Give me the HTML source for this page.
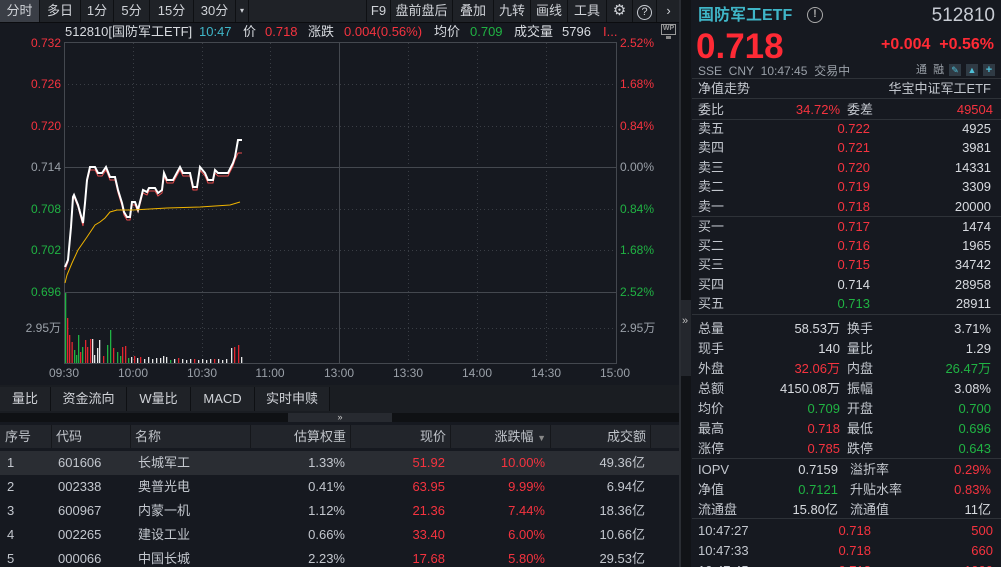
<!DOCTYPE html>
<html style="width:1001px;height:567px;overflow:hidden"><head><meta charset="utf-8"><style>
*{margin:0;padding:0;box-sizing:border-box}
body{width:1001px;height:567px;background:#161920;font-family:"Liberation Sans","Noto Sans CJK SC",sans-serif;color:#c3c7ce;font-size:13px;position:relative;overflow:hidden}
.a{position:absolute;white-space:nowrap;line-height:1}
.r{color:#f5333f}.g{color:#20b343}.w{color:#d8dbe0}.c{color:#3fb6c8}.gy{color:#9aa0a8}
.tb{position:absolute;top:0;height:22px;background:#1f2227;border-right:1px solid #0e1013;font-size:13px;line-height:22px;text-align:center;color:#d0d3d8}
.hl{position:absolute;height:1px;background:#2e3238}
.tab{position:absolute;top:387px;height:24px;line-height:24px;text-align:center;background:#1f2227;border-right:1px solid #0e1013;color:#d0d3d8}
.th{position:absolute;top:425px;height:23px;line-height:23px;color:#c0c4ca;border-right:1px solid #15171b}
.row{position:absolute;left:0;width:680px;height:24px;line-height:24px}
.row span{position:absolute;white-space:nowrap}
</style></head><body>
<!-- toolbar -->
<div class="a" style="left:0;top:0;width:680px;height:22px;background:#1f2227"></div>
<div class="tb" style="left:0;width:40px;background:#3a3e46">分时</div>
<div class="tb" style="left:40px;width:41px">多日</div>
<div class="tb" style="left:81px;width:33px">1分</div>
<div class="tb" style="left:114px;width:36px">5分</div>
<div class="tb" style="left:150px;width:44px">15分</div>
<div class="tb" style="left:194px;width:42px">30分</div>
<div class="tb" style="left:236px;width:13px;font-size:8px">▾</div>
<div class="tb" style="left:366px;width:25px;border-left:1px solid #0e1013">F9</div>
<div class="tb" style="left:391px;width:62px">盘前盘后</div>
<div class="tb" style="left:453px;width:41px">叠加</div>
<div class="tb" style="left:494px;width:37px">九转</div>
<div class="tb" style="left:531px;width:37px">画线</div>
<div class="tb" style="left:568px;width:39px">工具</div>
<div class="tb" style="left:607px;width:26px;font-size:15px">⚙</div>
<div class="tb" style="left:633px;width:24px"><span style="display:inline-block;width:15px;height:15px;border:1.5px solid #c8ccd2;border-radius:50%;font-size:11px;line-height:12px;margin-top:3px">?</span></div>
<div class="tb" style="left:657px;width:23px;border:none">›</div>
<div class="a" style="left:0;top:22px;width:680px;height:1px;background:#0b0c0f"></div>

<!-- chart header -->
<div class="a w" style="left:65px;top:25px">512810[国防军工ETF]</div>
<div class="a c" style="left:199px;top:25px">10:47</div>
<div class="a w" style="left:243px;top:25px">价</div>
<div class="a r" style="left:265px;top:25px">0.718</div>
<div class="a w" style="left:308px;top:25px">涨跌</div>
<div class="a r" style="left:344px;top:25px">0.004(0.56%)</div>
<div class="a w" style="left:434px;top:25px">均价</div>
<div class="a g" style="left:470px;top:25px">0.709</div>
<div class="a w" style="left:514px;top:25px">成交量</div>
<div class="a w" style="left:562px;top:25px">5796</div>
<div class="a r" style="left:603px;top:25px">I...</div>
<div class="a" style="left:661px;top:24px;width:15px;height:11px;border:1.5px solid #999;font-size:7px;line-height:8px;text-align:center;color:#999;font-weight:bold">WP</div>
<div class="a" style="left:666px;top:36px;width:5px;height:3px;background:#888"></div>

<svg class="a" style="left:0;top:0" width="680" height="385">
<g font-family="Liberation Sans" font-size="12" text-anchor="end">
<text x="61" y="47" fill="#f5333f">0.732</text>
<text x="61" y="88" fill="#f5333f">0.726</text>
<text x="61" y="130" fill="#f5333f">0.720</text>
<text x="61" y="171" fill="#9aa0a8">0.714</text>
<text x="61" y="213" fill="#20b343">0.708</text>
<text x="61" y="254" fill="#20b343">0.702</text>
<text x="61" y="296" fill="#20b343">0.696</text>
<text x="61" y="332" fill="#9aa0a8">2.95万</text>
</g>
<g font-family="Liberation Sans" font-size="12">
<text x="620" y="47" fill="#f5333f">2.52%</text>
<text x="620" y="88" fill="#f5333f">1.68%</text>
<text x="620" y="130" fill="#f5333f">0.84%</text>
<text x="620" y="171" fill="#9aa0a8">0.00%</text>
<text x="620" y="213" fill="#20b343">0.84%</text>
<text x="620" y="254" fill="#20b343">1.68%</text>
<text x="620" y="296" fill="#20b343">2.52%</text>
<text x="620" y="332" fill="#9aa0a8">2.95万</text>
</g>
<g font-family="Liberation Sans" font-size="12" fill="#9aa0a8" text-anchor="middle">
<text x="64" y="377">09:30</text><text x="133" y="377">10:00</text><text x="202" y="377">10:30</text><text x="270" y="377">11:00</text><text x="339" y="377">13:00</text><text x="408" y="377">13:30</text><text x="477" y="377">14:00</text><text x="546" y="377">14:30</text><text x="615" y="377">15:00</text>
</g>
<g stroke="#3a3e45" stroke-width="1" stroke-dasharray="1,3">
<line x1="64" y1="84.5" x2="616" y2="84.5"/><line x1="64" y1="126.5" x2="616" y2="126.5"/><line x1="64" y1="209.5" x2="616" y2="209.5"/><line x1="64" y1="250.5" x2="616" y2="250.5"/><line x1="64" y1="328.5" x2="616" y2="328.5"/>
<line x1="133.5" y1="43" x2="133.5" y2="363"/><line x1="202.5" y1="43" x2="202.5" y2="363"/><line x1="270.5" y1="43" x2="270.5" y2="363"/><line x1="408.5" y1="43" x2="408.5" y2="363"/><line x1="477.5" y1="43" x2="477.5" y2="363"/><line x1="546.5" y1="43" x2="546.5" y2="363"/>
</g>
<g stroke="#44484f" stroke-width="1" fill="none">
<rect x="64.5" y="42.5" width="552" height="321"/>
<line x1="64" y1="167.5" x2="616" y2="167.5"/>
<line x1="64" y1="292.5" x2="616" y2="292.5"/>
<line x1="339.5" y1="43" x2="339.5" y2="363"/>
</g>
<!-- volume -->
<g>
<rect x="65" y="293" width="1.3" height="70" fill="#20b343"/>
<rect x="67" y="318" width="1.3" height="45" fill="#e0262f"/>
<rect x="69" y="335" width="1.3" height="28" fill="#e0262f"/>
<rect x="71.5" y="342" width="1.3" height="21" fill="#e0262f"/>
<rect x="74" y="350" width="1.3" height="13" fill="#20b343"/>
<rect x="76" y="355" width="1.3" height="8" fill="#20b343"/>
<rect x="78" y="335" width="1.3" height="28" fill="#20b343"/>
<rect x="80" y="352" width="1.3" height="11" fill="#e0262f"/>
<rect x="82" y="347" width="1.3" height="16" fill="#20b343"/>
<rect x="85" y="340" width="1.3" height="23" fill="#e0262f"/>
<rect x="87" y="347" width="1.3" height="16" fill="#e0262f"/>
<rect x="90" y="339" width="1.3" height="24" fill="#e0262f"/>
<rect x="92" y="339" width="1.3" height="24" fill="#e8e8e8"/>
<rect x="94" y="355" width="1.3" height="8" fill="#e8e8e8"/>
<rect x="97" y="348" width="1.3" height="15" fill="#e8e8e8"/>
<rect x="99" y="340" width="1.3" height="23" fill="#e8e8e8"/>
<rect x="103" y="356" width="1.3" height="7" fill="#e0262f"/>
<rect x="107" y="345" width="1.3" height="18" fill="#20b343"/>
<rect x="110" y="330" width="1.3" height="33" fill="#20b343"/>
<rect x="113" y="348" width="1.3" height="15" fill="#e0262f"/>
<rect x="117" y="352" width="1.3" height="11" fill="#20b343"/>
<rect x="120" y="356" width="1.3" height="7" fill="#20b343"/>
<rect x="122" y="347" width="1.3" height="16" fill="#e0262f"/>
<rect x="125" y="346" width="1.3" height="17" fill="#e0262f"/>
<rect x="128" y="358" width="1.3" height="5" fill="#20b343"/>
<rect x="131" y="357" width="1.3" height="6" fill="#e8e8e8"/>
<rect x="134" y="356" width="1.3" height="7" fill="#e0262f"/>
<rect x="137" y="358" width="1.3" height="5" fill="#e8e8e8"/>
<rect x="140" y="357" width="1.3" height="6" fill="#e0262f"/>
<rect x="144" y="359" width="1.3" height="4" fill="#e8e8e8"/>
<rect x="148" y="357" width="1.3" height="6" fill="#e8e8e8"/>
<rect x="152" y="359" width="1.3" height="4" fill="#e8e8e8"/>
<rect x="156" y="358" width="1.3" height="5" fill="#e8e8e8"/>
<rect x="160" y="358" width="1.3" height="5" fill="#e8e8e8"/>
<rect x="163" y="356" width="1.3" height="7" fill="#e8e8e8"/>
<rect x="166" y="357" width="1.3" height="6" fill="#e8e8e8"/>
<rect x="170" y="360" width="1.3" height="3" fill="#20b343"/>
<rect x="174" y="359" width="1.3" height="4" fill="#e8e8e8"/>
<rect x="178" y="358" width="1.3" height="5" fill="#e0262f"/>
<rect x="182" y="359" width="1.3" height="4" fill="#e8e8e8"/>
<rect x="186" y="360" width="1.3" height="3" fill="#e8e8e8"/>
<rect x="190" y="359" width="1.3" height="4" fill="#e8e8e8"/>
<rect x="194" y="359" width="1.3" height="4" fill="#e0262f"/>
<rect x="198" y="360" width="1.3" height="3" fill="#e8e8e8"/>
<rect x="202" y="359" width="1.3" height="4" fill="#e8e8e8"/>
<rect x="206" y="360" width="1.3" height="3" fill="#e8e8e8"/>
<rect x="210" y="359" width="1.3" height="4" fill="#e8e8e8"/>
<rect x="214" y="359" width="1.3" height="4" fill="#e0262f"/>
<rect x="218" y="359" width="1.3" height="4" fill="#e8e8e8"/>
<rect x="222" y="360" width="1.3" height="3" fill="#e8e8e8"/>
<rect x="226" y="359" width="1.3" height="4" fill="#e8e8e8"/>
<rect x="231" y="348" width="1.3" height="15" fill="#e8e8e8"/>
<rect x="234" y="347" width="1.3" height="16" fill="#e0262f"/>
<rect x="238" y="345" width="1.3" height="18" fill="#e0262f"/>
<rect x="241" y="357" width="1.3" height="6" fill="#e8e8e8"/>
</g>
<polyline fill="none" stroke="#e94b4b" stroke-width="1" points="65,270 68,262 71,229 73,199 74,197 78,207 83,226 85,205 87,182 90,170 95,170 98,176 102,176 106,170 110,180 115,180 118,193 122,206 124,215 127,220 130,220 132,205 135,205 138,212 143,193 147,195 149,191 155,191 158,196 162,193 164,176 167,183 173,183 180,170 183,176 190,176 193,190 197,190 200,170 205,176 208,183 213,183 215,173 218,176 228,176 233,166 235,160 238,153 242,153"/>
<polyline fill="none" stroke="#ffffff" stroke-width="2" points="65,267 68,260 71,227 73,197 74,195 78,205 83,223 85,203 87,180 90,167 95,167 98,173 102,173 106,167 110,177 115,177 118,190 122,203 124,212 127,217 130,217 132,202 135,202 138,210 143,190 147,192 149,188 155,188 158,193 162,190 164,173 167,180 173,180 180,167 183,173 190,173 193,187 197,187 200,167 205,173 208,180 213,180 215,170 218,173 228,173 233,163 235,157 238,140 242,140"/>
<polyline fill="none" stroke="#f0b400" stroke-width="1" points="65,283 67,275 72,263 78,250 87,237 95,225 100,222 105,218 110,212 117,210 133,210 167,208 200,207 230,205 240,202"/>
</svg>

<!-- bottom tabs -->
<div class="a" style="left:0;top:385px;width:680px;height:28px;background:#1a1d22"></div>
<div class="tab" style="left:0;width:51px">量比</div>
<div class="tab" style="left:51px;width:76px">资金流向</div>
<div class="tab" style="left:127px;width:64px">W量比</div>
<div class="tab" style="left:191px;width:64px">MACD</div>
<div class="tab" style="left:255px;width:75px">实时申赎</div>
<div class="a" style="left:0;top:413px;width:680px;height:9px;background:#0f1114"></div>
<div class="a" style="left:288px;top:413px;width:104px;height:9px;background:#272a30;font-size:9px;color:#ccc;text-align:center;line-height:8px">»</div>
<!-- table -->
<div class="a" style="left:0;top:425px;width:680px;height:23px;background:#22252b"></div>
<div class="th" style="left:0;width:52px;padding-left:5px">序号</div>
<div class="th" style="left:52px;width:79px;padding-left:4px">代码</div>
<div class="th" style="left:131px;width:120px;padding-left:4px">名称</div>
<div class="th" style="left:251px;width:100px;text-align:right;padding-right:4px">估算权重</div>
<div class="th" style="left:351px;width:100px;text-align:right;padding-right:4px">现价</div>
<div class="th" style="left:451px;width:100px;text-align:right;padding-right:4px">涨跌幅 <span style="font-size:9px;color:#888">▼</span></div>
<div class="th" style="left:551px;width:100px;text-align:right;padding-right:4px">成交额</div>
<div class="row" style="top:451px;background:#2a2d33"><span style="left:7px">1</span><span style="left:58px">601606</span><span style="left:138px">长城军工</span><span style="right:335px">1.33%</span><span class="r" style="right:235px">51.92</span><span class="r" style="right:135px">10.00%</span><span style="right:35px">49.36亿</span></div>
<div class="row" style="top:475px"><span style="left:7px">2</span><span style="left:58px">002338</span><span style="left:138px">奥普光电</span><span style="right:335px">0.41%</span><span class="r" style="right:235px">63.95</span><span class="r" style="right:135px">9.99%</span><span style="right:35px">6.94亿</span></div>
<div class="row" style="top:499px"><span style="left:7px">3</span><span style="left:58px">600967</span><span style="left:138px">内蒙一机</span><span style="right:335px">1.12%</span><span class="r" style="right:235px">21.36</span><span class="r" style="right:135px">7.44%</span><span style="right:35px">18.36亿</span></div>
<div class="row" style="top:523px"><span style="left:7px">4</span><span style="left:58px">002265</span><span style="left:138px">建设工业</span><span style="right:335px">0.66%</span><span class="r" style="right:235px">33.40</span><span class="r" style="right:135px">6.00%</span><span style="right:35px">10.66亿</span></div>
<div class="row" style="top:547px"><span style="left:7px">5</span><span style="left:58px">000066</span><span style="left:138px">中国长城</span><span style="right:335px">2.23%</span><span class="r" style="right:235px">17.68</span><span class="r" style="right:135px">5.80%</span><span style="right:35px">29.53亿</span></div>

<!-- divider -->
<div class="a" style="left:679px;top:0;width:2px;height:567px;background:#2a2d33"></div>
<div class="a" style="left:681px;top:0;width:10px;height:567px;background:#111317"></div>
<div class="a" style="left:681px;top:300px;width:10px;height:76px;background:#24272d"></div>
<div class="a" style="left:682px;top:316px;font-size:11px;color:#bbb">»</div>

<!-- right panel -->
<div class="a c" style="left:698px;top:8px;font-size:16px;font-weight:bold">国防军工ETF</div>
<div class="a" style="left:807px;top:7px;width:16px;height:16px;border:1.5px solid #aaa;border-radius:50%;font-size:11px;text-align:center;line-height:13px;color:#aaa;font-weight:bold">!</div>
<div class="a" style="right:6px;top:6px;font-size:19px;color:#c8ccd4">512810</div>
<div class="a r" style="left:696px;top:29px;font-size:35px;font-weight:bold;color:#ff2a35">0.718</div>
<div class="a r" style="right:7px;top:37px;font-size:16px;font-weight:bold;color:#ff2a35">+0.004&nbsp;&nbsp;+0.56%</div>
<div class="a gy" style="left:698px;top:65px;font-size:12px">SSE&nbsp;&nbsp;CNY&nbsp;&nbsp;10:47:45&nbsp;&nbsp;交易中</div>
<div class="a gy" style="left:916px;top:65px;font-size:11px">通&nbsp;&nbsp;融</div>
<div class="a" style="left:949px;top:64px;width:12px;height:12px;background:#2f3a44;color:#4fc0d8;font-size:9px;text-align:center;line-height:12px">✎</div>
<div class="a" style="left:966px;top:64px;width:12px;height:12px;background:#2f3a44;color:#4fc0d8;font-size:9px;text-align:center;line-height:12px">▲</div>
<div class="a" style="left:983px;top:64px;width:12px;height:12px;background:#2f3a44;color:#4fc0d8;font-size:11px;text-align:center;line-height:12px;font-weight:bold">+</div>
<div class="hl" style="left:692px;top:78px;width:309px"></div>
<div class="a" style="left:698px;top:82px">净值走势</div>
<div class="a" style="right:10px;top:82px">华宝中证军工ETF</div>
<div class="hl" style="left:692px;top:98px;width:309px"></div>
<div class="a" style="left:698px;top:103px">委比</div><div class="a r" style="right:161px;top:103px">34.72%</div>
<div class="a" style="left:847px;top:103px">委差</div><div class="a r" style="right:8px;top:103px">49504</div>
<div class="hl" style="left:692px;top:119px;width:309px"></div>
<div class="a" style="left:698px;top:119px;line-height:19.4px">卖五<br>卖四<br>卖三<br>卖二<br>卖一</div>
<div class="a r" style="right:131px;top:119px;line-height:19.4px;text-align:right">0.722<br>0.721<br>0.720<br>0.719<br>0.718</div>
<div class="a w" style="right:10px;top:119px;line-height:19.4px;text-align:right">4925<br>3981<br>14331<br>3309<br>20000</div>
<div class="hl" style="left:692px;top:216px;width:309px"></div>
<div class="a" style="left:698px;top:217px;line-height:19.2px">买一<br>买二<br>买三<br>买四<br>买五</div>
<div class="a" style="right:131px;top:217px;line-height:19.2px;text-align:right"><span class="r">0.717</span><br><span class="r">0.716</span><br><span class="r">0.715</span><br><span class="w">0.714</span><br><span class="g">0.713</span></div>
<div class="a w" style="right:10px;top:217px;line-height:19.2px;text-align:right">1474<br>1965<br>34742<br>28958<br>28911</div>
<div class="hl" style="left:692px;top:314px;width:309px"></div>
<div class="a" style="left:698px;top:319px;line-height:20px">总量<br>现手<br>外盘<br>总额<br>均价<br>最高<br>涨停</div>
<div class="a w" style="right:161px;top:319px;line-height:20px;text-align:right">58.53万<br>140<br><span class="r">32.06万</span><br>4150.08万<br><span class="g">0.709</span><br><span class="r">0.718</span><br><span class="r">0.785</span></div>
<div class="a" style="left:847px;top:319px;line-height:20px">换手<br>量比<br>内盘<br>振幅<br>开盘<br>最低<br>跌停</div>
<div class="a w" style="right:10px;top:319px;line-height:20px;text-align:right">3.71%<br>1.29<br><span class="g">26.47万</span><br>3.08%<br><span class="g">0.700</span><br><span class="g">0.696</span><br><span class="g">0.643</span></div>
<div class="hl" style="left:692px;top:458px;width:309px"></div>
<div class="a" style="left:698px;top:460px;line-height:20px">IOPV<br>净值<br>流通盘</div>
<div class="a w" style="right:163px;top:460px;line-height:20px;text-align:right">0.7159<br><span class="g">0.7121</span><br>15.80亿</div>
<div class="a" style="left:850px;top:460px;line-height:20px">溢折率<br>升贴水率<br>流通值</div>
<div class="a w" style="right:10px;top:460px;line-height:20px;text-align:right"><span class="r">0.29%</span><br><span class="r">0.83%</span><br>11亿</div>
<div class="hl" style="left:692px;top:518px;width:309px"></div>
<div class="a" style="left:698px;top:521px;line-height:20px">10:47:27<br>10:47:33<br>10:47:45</div>
<div class="a r" style="right:130px;top:521px;line-height:20px;text-align:right">0.718<br>0.718<br>0.718</div>
<div class="a r" style="right:8px;top:521px;line-height:20px;text-align:right">500<br>660<br>1000</div>
</body></html>
